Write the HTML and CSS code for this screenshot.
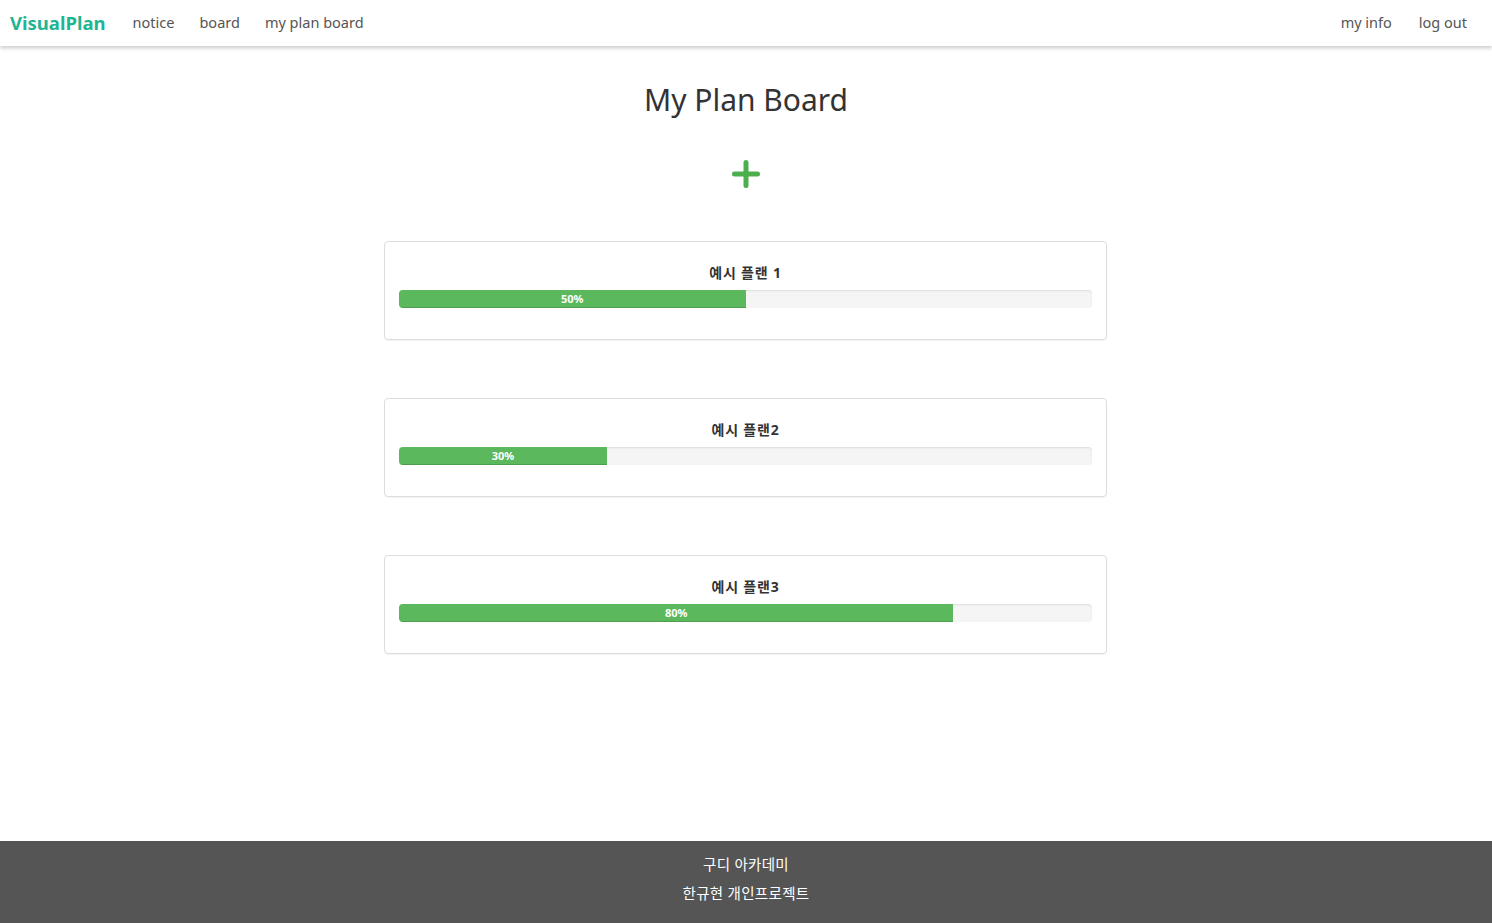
FILE: index.html
```html
<!DOCTYPE html>
<html lang="ko">
<head>
<meta charset="utf-8">
<title>VisualPlan</title>
<link rel="stylesheet" href="styles.css">
</head>
<body>
<div class="page">
  <nav class="navbar">
    <div class="nav-left">
      <a class="brand" href="#">VisualPlan</a>
      <a class="nav-link" href="#">notice</a>
      <a class="nav-link" href="#">board</a>
      <a class="nav-link" href="#">my plan board</a>
    </div>
    <div class="nav-right">
      <a class="nav-link" href="#">my info</a>
      <a class="nav-link" href="#">log out</a>
    </div>
  </nav>

  <main class="main">
    <h1 class="title">My Plan Board</h1>
    <div class="add">
      <svg width="28" height="28" viewBox="0 0 28 28" aria-hidden="true">
        <path d="M14 2.5 V25.5 M2.5 14 H25.5" stroke="#4cae4c" stroke-width="5" stroke-linecap="round" fill="none"/>
      </svg>
    </div>
    <div class="plans">
      <div class="plan-card">
        <div class="plan-title">예시 플랜 1</div>
        <div class="progress"><div class="progress-bar" style="width:50%">50%</div></div>
      </div>
      <div class="plan-card">
        <div class="plan-title">예시 플랜2</div>
        <div class="progress"><div class="progress-bar" style="width:30%">30%</div></div>
      </div>
      <div class="plan-card">
        <div class="plan-title">예시 플랜3</div>
        <div class="progress"><div class="progress-bar" style="width:80%">80%</div></div>
      </div>
    </div>
  </main>

  <footer class="footer">
    <div>구디 아카데미</div>
    <div>한규현 개인프로젝트</div>
  </footer>
</div>
</body>
</html>
```

FILE: styles.css
```css
* { box-sizing: border-box; }
html, body { margin: 0; padding: 0; height: 100%; }
body {
  font-family: "Noto Sans", "Noto Sans CJK KR", sans-serif;
  font-size: 14px;
  color: #333;
  background: #fff;
}
a { text-decoration: none; }
.page {
  min-height: 100vh;
  display: flex;
  flex-direction: column;
}
.navbar {
  height: 46px;
  flex: none;
  display: flex;
  justify-content: space-between;
  align-items: center;
  background: #fff;
  box-shadow: 0 2px 4px rgba(0,0,0,0.22);
  padding: 0 25px 2px 10px;
}
.nav-left, .nav-right { display: flex; align-items: center; }
.brand {
  color: #1fb593;
  font-weight: bold;
  font-size: 18.5px;
  margin-right: 27px;
}
.nav-link {
  color: #555;
  font-size: 14.5px;
}
.nav-left .nav-link { margin-right: 25px; }
.nav-right .nav-link { margin-left: 27px; }
.main {
  flex: 1;
  display: flex;
  flex-direction: column;
  align-items: center;
}
.title {
  margin: 36px 0 0;
  font-size: 30px;
  font-weight: 400;
  line-height: 36px;
  color: #333;
}
.add {
  margin-top: 42px;
  height: 28px;
  display: flex;
}
.plans {
  margin-top: 53px;
  display: flex;
  flex-direction: column;
  gap: 58px;
  width: 723px;
  margin-right: 1px;
}
.plan-card {
  border: 1px solid #ddd;
  border-radius: 4px;
  padding: 21px 14px 31px;
  height: 99px;
  box-shadow: 0 1px 1px rgba(0,0,0,0.05);
}
.plan-title {
  text-align: center;
  font-weight: bold;
  font-size: 14px;
  line-height: 20px;
  letter-spacing: 0.8px;
  margin-bottom: 7px;
}
.progress {
  height: 18px;
  background: #f5f5f5;
  border-radius: 4px;
  overflow: hidden;
  box-shadow: inset 0 1px 2px rgba(0,0,0,0.1);
}
.progress-bar {
  height: 100%;
  background: #5cb85c;
  color: #fff;
  font-size: 11px;
  font-weight: bold;
  line-height: 18px;
  text-align: center;
  box-shadow: inset 0 -1px 0 rgba(0,0,0,0.15);
}
.footer {
  height: 82px;
  flex: none;
  background: #555;
  color: #fff;
  text-align: center;
  font-size: 14.5px;
  letter-spacing: 0.3px;
  padding-top: 9px;
  line-height: 29px;
}
```
